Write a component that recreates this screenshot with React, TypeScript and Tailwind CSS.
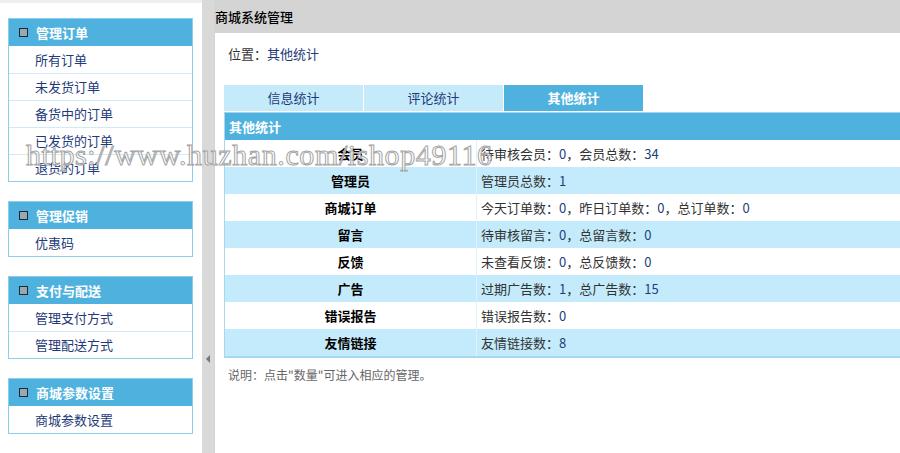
import React from 'react';

const menus = [
  { title: '管理订单', items: ['所有订单', '未发货订单', '备货中的订单', '已发货的订单', '退货的订单'] },
  { title: '管理促销', items: ['优惠码'] },
  { title: '支付与配送', items: ['管理支付方式', '管理配送方式'] },
  { title: '商城参数设置', items: ['商城参数设置'] },
];

const rows = [
  { name: '会员', info: '待审核会员：0，会员总数：34' },
  { name: '管理员', info: '管理员总数：1' },
  { name: '商城订单', info: '今天订单数：0，昨日订单数：0，总订单数：0' },
  { name: '留言', info: '待审核留言：0，总留言数：0' },
  { name: '反馈', info: '未查看反馈：0，总反馈数：0' },
  { name: '广告', info: '过期广告数：1，总广告数：15' },
  { name: '错误报告', info: '错误报告数：0' },
  { name: '友情链接', info: '友情链接数：8' },
];

const tabs = ['信息统计', '评论统计', '其他统计'];

// 数字部分用深蓝色显示
const Info = ({ text }: { text: string }) => {
  const parts = text.split(/(\d+)/);
  return (
    <>
      {parts.map((p, i) =>
        /^\d+$/.test(p) ? (
          <span key={i} className="text-[#1c3f7c]">{p}</span>
        ) : (
          <span key={i}>{p}</span>
        )
      )}
    </>
  );
};

const MenuBox = ({ title, items }: { title: string; items: string[] }) => (
  <div className="border border-[#8ccdec] bg-white">
    <div className="h-[27px] bg-[#4fb2de] flex items-center pl-[10px] gap-[8px]">
      <span className="w-[9px] h-[9px] border-[1.5px] border-[#1a2a3a] bg-[#9aa7b0]"></span>
      <span className="text-white font-bold text-[13px]">{title}</span>
    </div>
    {items.map((it, i) => (
      <div
        key={it}
        className={`h-[27px] flex items-center pl-[26px] text-[13px] text-[#1e3a78] ${
          i > 0 ? 'border-t border-[#cfeaf8]' : ''
        }`}
      >
        {it}
      </div>
    ))}
  </div>
);

export default function App() {
  return (
    <div
      className="relative w-[900px] h-[453px] overflow-hidden flex bg-white"
      style={{ fontFamily: '"Noto Sans CJK SC", "Liberation Sans", sans-serif' }}
    >
      {/* 左侧菜单 */}
      <div className="w-[202px] shrink-0 bg-white border-t-[3px] border-[#eeeeee] pt-[15px] pl-[8px] pr-[9px] flex flex-col gap-[19px]">
        {menus.map((m) => (
          <MenuBox key={m.title} title={m.title} items={m.items} />
        ))}
      </div>

      {/* 分隔条 */}
      <div className="w-[12px] shrink-0 bg-[#d9d9d9] flex flex-col">
        <div className="h-[355px]"></div>
        <div className="pl-[4px]">
          <div className="w-0 h-0 border-y-[4px] border-y-transparent border-r-[4px] border-r-[#777]"></div>
        </div>
      </div>

      {/* 右侧内容 */}
      <div className="flex-1 min-w-0 flex flex-col bg-[#d4d4d4]">
        <div className="h-[33px] shrink-0 flex items-center pl-[1px] text-[13px] font-medium text-black">
          商城系统管理
        </div>
        <div className="flex-1 bg-white pl-[9px] ml-[1px]">
          <div className="pt-[11px] pl-[4px] h-[52px] text-[13px] text-[#333]">
            位置：<span className="text-[#1e3a78]">其他统计</span>
          </div>
          <div className="flex gap-[1px] h-[26px]">
            {tabs.map((t, i) => (
              <div
                key={t}
                className={`w-[139px] flex items-center justify-center text-[13px] ${
                  i === 2 ? 'bg-[#4fb2de] text-white font-bold' : 'bg-[#c5ebfb] text-[#1e3a78]'
                }`}
              >
                {t}
              </div>
            ))}
          </div>
          <div className="w-[700px] mt-[1px] border border-[#a8d8ef] border-t-[#9fd3ee] border-b-2">
            <div className="h-[27px] bg-[#4fb2de] flex items-center pl-[4px] text-white font-bold text-[13px]">
              其他统计
            </div>
            {rows.map((r, i) => (
              <div
                key={r.name}
                className={`h-[27px] flex text-[13px] ${i % 2 === 1 ? 'bg-[#c4ebfb]' : 'bg-white'}`}
              >
                <div className="w-[252px] shrink-0 flex items-center justify-center font-bold text-black border-r border-[#e2f2fb]">
                  {r.name}
                </div>
                <div className="flex items-center pl-[4px] text-[#333]">
                  <Info text={r.info} />
                </div>
              </div>
            ))}
          </div>
          <div className="pt-[8px] pl-[4px] text-[12px] text-[#666]">说明：点击"数量"可进入相应的管理。</div>
        </div>
      </div>

      {/* 水印 */}
      <div
        className="absolute left-[26px] top-[140px] text-[30px] tracking-[0.6px] leading-none text-white/70 [-webkit-text-stroke:1px_#a5a5a5] pointer-events-none whitespace-nowrap"
        style={{ fontFamily: '"Liberation Serif", serif' }}
      >
        https://www.huzhan.com/ishop49116
      </div>
    </div>
  );
}
